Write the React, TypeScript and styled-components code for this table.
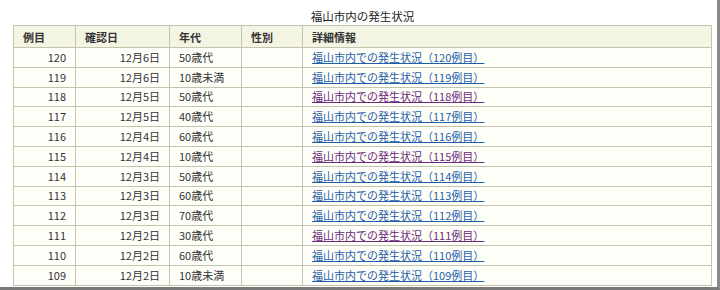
import styled, { createGlobalStyle } from "styled-components"

interface Case {
  no: number
  date: string
  age: string
  visited?: boolean
}

const cases: Case[] = [
  { no: 120, date: "12月6日", age: "50歳代" },
  { no: 119, date: "12月6日", age: "10歳未満" },
  { no: 118, date: "12月5日", age: "50歳代", visited: true },
  { no: 117, date: "12月5日", age: "40歳代" },
  { no: 116, date: "12月4日", age: "60歳代" },
  { no: 115, date: "12月4日", age: "10歳代", visited: true },
  { no: 114, date: "12月3日", age: "50歳代" },
  { no: 113, date: "12月3日", age: "60歳代" },
  { no: 112, date: "12月3日", age: "70歳代" },
  { no: 111, date: "12月2日", age: "30歳代", visited: true },
  { no: 110, date: "12月2日", age: "60歳代" },
  { no: 109, date: "12月2日", age: "10歳未満" },
]

export default function App(): JSX.Element {
  return (
    <>
      <GlobalStyle />
      <Frame>
        <Table>
          <Caption>福山市内の発生状況</Caption>
          <colgroup>
            <col style={{ width: 62 }} />
            <col style={{ width: 94 }} />
            <col style={{ width: 72 }} />
            <col style={{ width: 61 }} />
            <col />
          </colgroup>
          <thead>
            <tr>
              <Th>例目</Th>
              <Th>確認日</Th>
              <Th>年代</Th>
              <Th>性別</Th>
              <Th>詳細情報</Th>
            </tr>
          </thead>
          <tbody>
            {cases.map((c) => (
              <Row key={c.no}>
                <Td $align="right">{c.no}</Td>
                <Td $align="right">{c.date}</Td>
                <Td>{c.age}</Td>
                <Td />
                <Td>
                  <DetailLink href="#" $visited={c.visited}>
                    福山市内での発生状況（{c.no}例目）
                  </DetailLink>
                </Td>
              </Row>
            ))}
          </tbody>
        </Table>
      </Frame>
    </>
  )
}

const GlobalStyle = createGlobalStyle`
  body {
    margin: 0;
    background: #ffffff;
    font-family: "Noto Sans CJK JP", "DejaVu Sans", sans-serif;
    color: #333333;
  }
`

const Frame = styled.div`
  box-sizing: border-box;
  width: 720px;
  height: 290px;
  padding: 8px 0 0 13px;
  border-right: 3px solid #8a8a8a;
  border-bottom: 3px solid #7a7a7a;
`

const Table = styled.table`
  width: 699px;
  border-collapse: collapse;
  table-layout: fixed;
  font-size: 11px;
`

const Caption = styled.caption`
  font-size: 11.5px;
  line-height: 17px;
  color: #222222;
`

const Th = styled.th`
  height: 22px;
  padding: 0 9px;
  box-sizing: border-box;
  text-align: left;
  font-weight: bold;
  background: #f4f4e3;
  border: 1px solid #c4c4ae;
  color: #333333;
`

const Row = styled.tr`
  height: 19.8px;
`

const Td = styled.td<{ $align?: "left" | "right" }>`
  padding: 0 9px;
  line-height: 17px;
  text-align: ${({ $align }) => $align ?? "left"};
  background: #fffffa;
  border: 1px solid #c4c4ae;
  white-space: nowrap;
`

const DetailLink = styled.a<{ $visited?: boolean }>`
  color: ${({ $visited }) => ($visited ? "#6b2a7c" : "#1f5ea8")};
  text-decoration: underline;
`
